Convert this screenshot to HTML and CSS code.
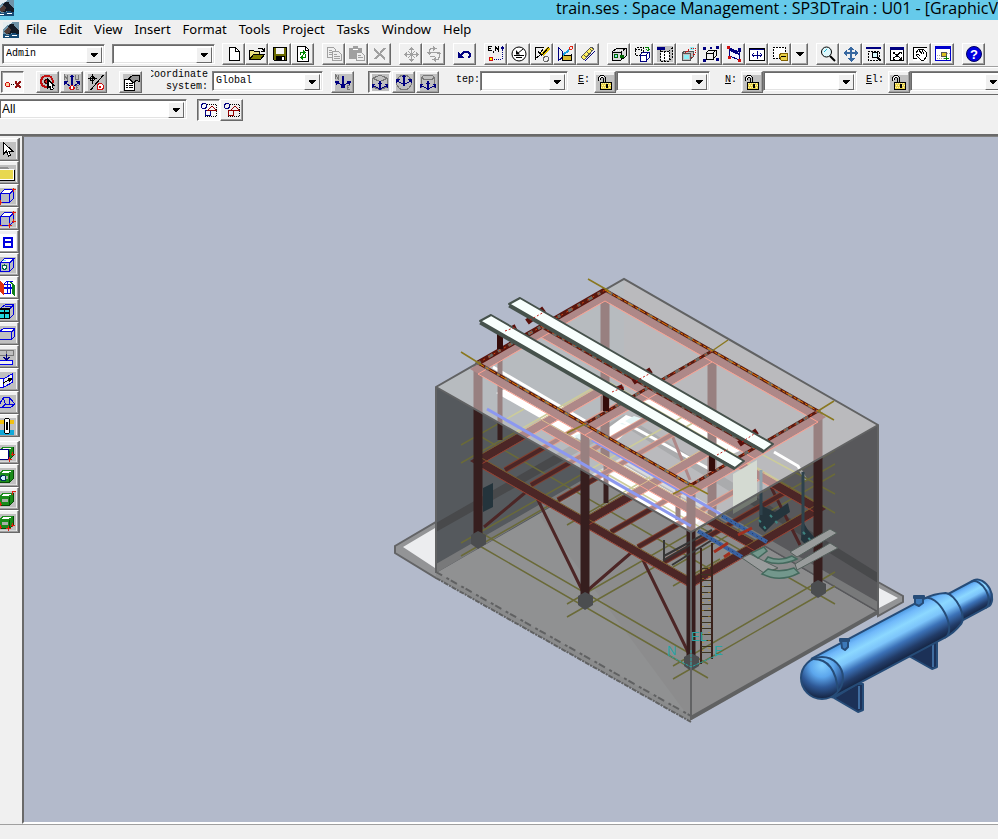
FILE: index.html
```html
<!DOCTYPE html>
<html lang="en">
<head>
<meta charset="utf-8">
<title>Space Management</title>
<link rel="stylesheet" href="styles.css">
</head>
<body>
<svg class="defs" aria-hidden="true">
  <symbol id="app" viewBox="0 0 16 16"><path fill="#6f93a8" d="M0 0h16v16H0z"/><path fill="#e4edf1" d="M0 0h9L7 2 4 3 2 6 0 7z"/><path fill="#141a24" d="M5 5l2-3h4l1 3 4 3v4l-6-1-5 1-3-2z"/><path fill="#4e3b37" d="M2 8l3-3 3 2-1 4-4 1-2-2z"/><path fill="#174a74" d="M0 12l5 1 5-2 6 1v4H0z"/><path fill="#fff" d="M2 14h4v1H2zM9 13h5v1H9z"/></symbol>
  <symbol id="drop" viewBox="0 0 16 16"><path fill="#000" d="M4 6h8v1H11v1h-1v1H9v1H7V9H6V8H5V7H4z"/></symbol>
  <symbol id="lock" viewBox="0 0 18 16"><path fill="#c0c0c0" d="M0 0h18v16H0z"/><path class="k" d="M2.500 6V3l2-2h3l2 2v4M4.500 5V4l1-1h1l1 1v3"/><path class="w" d="M3.500 5V4l2-2h2"/><path fill="#e8d048" stroke="#000" d="M4.500 7.500h11v7h-11z"/><path stroke="#fff8b0" stroke-dasharray="1 1" d="M5 9h10M6 11h9M5 13h10"/><path class="k" stroke-width="2" d="M11 9v4"/></symbol>
  <symbol id="cube" viewBox="0 0 16 16"><path fill="#c0c0c0" d="M0 0h16v16H0z"/><path fill="#b8bcc4" d="M1 6l4-4h9v8l-4 4H1z"/><path fill="#fff" d="M2 5l3-3h9l-3 3z"/><path class="u" d="M1 6h9v8H1zM1 6l4-4h9l-4 4M14 2v8l-4 4"/></symbol>
  <symbol id="gcube" viewBox="0 0 16 16"><path fill="#c0c0c0" d="M0 0h16v16H0z"/><path fill="#1a8c1a" d="M0 6l4-4h10v8l-4 4H0z"/><path fill="#fff" d="M2 5l3-2h7l-3 2z"/><path fill="#a8b0a8" d="M3 8h5v3H3z"/><path stroke="#064c06" d="M0 14h10l4-4V2M10 6v8"/></symbol>
</svg>

<header class="title"><svg class="app"><use href="#app"/></svg><h1>train.ses : Space Management : SP3DTrain : U01 - [GraphicV</h1></header>

<nav class="menu">
  <svg class="app"><use href="#app"/></svg>
  <button>File</button><button>Edit</button><button>View</button><button>Insert</button><button>Format</button><button>Tools</button><button>Project</button><button>Tasks</button><button>Window</button><button>Help</button>
</nav>

<div class="bar first">
  <span class="combo std"><select aria-label="Permission group"><option>Admin</option></select><svg><use href="#drop"/></svg></span>
  <span class="combo std"><select aria-label="Filter"><option></option></select><svg><use href="#drop"/></svg></span>
  <div class="group">
    <button aria-label="New"><svg viewBox="0 0 16 16"><path fill="#fff" stroke="#000" d="M3.500 1.500h6l4 4v9h-10z"/><path class="k" d="M9.500 1.500v4h4"/></svg></button>
    <button aria-label="Open"><svg viewBox="0 0 16 16"><path fill="#e8e080" stroke="#000" d="M.5 13.500v-9h4l1 1h5v3"/><path fill="#808000" stroke="#000" d="M.5 13.500l4-5h11l-4 5z"/><path class="k" d="M9 3l2-1h2l2 3M15 2v3h-3"/></svg></button>
    <button aria-label="Save"><svg viewBox="0 0 16 16"><path fill="#6b6b00" stroke="#000" d="M1.500 1.500h13v13h-12l-1-1z"/><path fill="#f4f4f4" d="M4 2h8v6H4z"/><path fill="#000" d="M4 10h9v5H4z"/><path fill="#fff" d="M10 11h2v3h-2z"/></svg></button>
    <button aria-label="Refresh"><svg viewBox="0 0 16 16"><path fill="#fff" stroke="#000" d="M2.500 .5h8l3 3v12h-11z"/><path class="k" d="M10.500 1v3h3"/><path class="g" d="M5.500 9V6.500h4M10.500 8v3.500h-3"/><path fill="#080" d="M8 4l3 2.500-3 2.500zM8 9v5l-3-2.500z"/></svg></button>
  </div>
  <div class="group off">
    <button disabled aria-label="Copy"><svg viewBox="0 0 16 16"><path class="n" d="M1.500 1.500h6l2 2v8h-8zM3 4.500h3M3 6.500h3M3 8.500h3"/><path fill="#eee" stroke="#a0a0a0" d="M6.500 5.500h6l3 3v6h-9z"/><path class="n" d="M8 8.500h3M8 10.500h6M8 12.500h6"/></svg></button>
    <button disabled aria-label="Paste"><svg viewBox="0 0 16 16"><path fill="#a0a0a0" d="M0 2h4V0h5v2h4v11H0z"/><path class="w" d="M4 3.500h5"/><path fill="#eee" stroke="#a0a0a0" d="M7.500 6.500h5l3 3v5h-8z"/><path class="n" d="M9 9.500h3M9 11.500h5"/></svg></button>
    <button disabled aria-label="Delete"><svg viewBox="0 0 16 16"><path class="n" stroke-width="2" d="M2 3l11 10M13 2L3 13"/></svg></button>
  </div>
  <div class="group off">
    <button disabled aria-label="Move"><svg viewBox="0 0 16 16"><path class="n" d="M8.500 3v11M3 8.500h11M5 5l7 7M12 5l-7 7"/><path fill="#a0a0a0" d="M8.500 1l2.500 3H6zM8.500 16l2.500-3H6zM1 8.500L4 6v5zM16 8.500L13 6v5z"/></svg></button>
    <button disabled aria-label="Rotate"><svg viewBox="0 0 16 16"><path class="n" d="M8 2.500H5l-2 2v3M9 13.500h3l1-2V8M6 6.500h6M4 10.500h5"/><path fill="#a0a0a0" d="M7 0v5l4-2.500zM10 11v5l-4-2.500zM13 5l2 3h-5zM3 9l3-3H0z"/></svg></button>
  </div>
  <div class="group"><button aria-label="Undo"><svg viewBox="0 0 16 16"><path class="b" stroke-width="2" d="M4 9l3-3h4l2 2v2l-2 2"/><path fill="#000080" d="M1 6v6h6z"/></svg></button></div>
  <div class="group">
    <button aria-label="PinPoint"><svg viewBox="0 0 16 16"><path class="k" d="M.5 0v5M1 .5h3M1 2.500h2M1 4.500h3M5 5v2M7.500 5V0l3 5V0"/><path stroke="#000080" stroke-dasharray="1 1" d="M14.500 4v9M6 13.500h8"/><path fill="#000080" d="M14 0l2 2-2 2-2-2z"/><circle cx="3" cy="13" r="2" fill="#ff0" stroke="#d01010"/></svg></button>
    <button aria-label="Point along"><svg class="smooth" viewBox="0 0 16 16"><circle cx="8" cy="8" r="7" fill="#fff" stroke="#000" stroke-width="1"/><path class="k" d="M3 9.500h10M5 11.500h6M6 8l6-5"/><path fill="#000" d="M5 8.500V4l4 4.500z"/></svg></button>
    <button aria-label="Measure"><svg viewBox="0 0 16 16"><path class="k" d="M1 1.500h9M1.500 1v13M1 13l8-6M4 5l2 3 3-5"/><path stroke="#e0c000" stroke-width="3" d="M15 2L8 9"/><path class="k" d="M15 1L7 10"/><circle cx="12" cy="13" r="2.500" stroke="#666"/></svg></button>
    <button aria-label="Sketch plane"><svg viewBox="0 0 16 16"><path class="b" d="M1 1v14M1 1l4 4v7l-4 3M4 12l8-8"/><path fill="#d8b830" stroke="#000" d="M5 10l9-1v5H5z"/><path stroke="#18a0e0" stroke-width="2" d="M6 9l6-5"/><circle cx="14" cy="2" r="1.500" class="r"/></svg></button>
    <button aria-label="Ruler"><svg viewBox="0 0 16 16"><path fill="#fff060" stroke="#555" d="M1 11L11 1l3 2L4 14z"/><path class="b" d="M5 15L15 5"/><path stroke="#555" d="M4 9l2 2M7 6l2 2M10 3l2 2"/></svg></button>
  </div>
  <div class="group">
    <button aria-label="Define work set"><svg viewBox="0 0 16 16"><path fill="#d8d8d8" stroke="#000" d="M1 6l5-4h9v8l-5 4H1zM1 6h9v8M10 6l5-4"/><circle cx="5" cy="10" r="2" fill="#90e0f0" stroke="#060"/><path fill="#060" d="M9 9h4v3H9z"/><path class="w" stroke-dasharray="1 1" d="M5 4h7"/></svg></button>
    <button aria-label="Copy view"><svg viewBox="0 0 16 16"><path stroke="#000" stroke-dasharray="2 1" d="M1 3h6v6H1zM1 3l2-2h6M9 1v6"/><path fill="#fff" stroke="#000080" d="M6 9h6v6H6zM6 9l3-3h6v6l-3 3M12 9l3-3"/><path class="g" d="M11 1h3v4M12 3l2 2 2-2"/></svg></button>
    <button aria-label="Clip volume"><svg viewBox="0 0 16 16"><path fill="#c0c0c0" d="M0 0h16v16H0z"/><path fill="#000080" d="M0 1h8v3H0z"/><path fill="#fff" d="M4 6h8v8H4z"/><path class="k" stroke-dasharray="2 1" d="M3 4v11h9V5H3M12 5l3-3v10l-3 3M7 5v10"/></svg></button>
    <button aria-label="Clip by plane"><svg viewBox="0 0 16 16"><path fill="#c0c0c0" stroke="#555" d="M2 7h8v7H2zM2 7l3-2h8v6l-3 3"/><path fill="#8cf0f8" d="M4 9h5v4H4zM10 1h4v3h-4z"/><path stroke="#d01010" stroke-dasharray="1 1" d="M5 7l6-5h4v5l-4 6"/></svg></button>
    <button aria-label="Fit selected"><svg viewBox="0 0 16 16"><path class="k" d="M3 7h7v6H3zM3 7l3-3h7v6l-3 3M10 7l3-3"/><path fill="#000080" d="M0 1h3v3H0zM13 0h3v3h-3zM0 13h3v3H0zM13 12h3v3h-3zM7 1h2v2H7z"/></svg></button>
    <button aria-label="Look at surface"><svg viewBox="0 0 16 16"><path fill="#f0f4ff" stroke="#000080" d="M3 2l10 4v8L4 10z"/><path stroke="#000080" stroke-width="2" d="M4 4l9 4"/><path fill="#d01010" d="M1 0h3v3H1zM12 13h3v3h-3zM2 10h3v3H2z"/><path fill="#000080" d="M12 2h3v4h-3z"/></svg></button>
    <button aria-label="Rotate view"><svg viewBox="0 0 16 16"><path fill="#fff" stroke="#000" d="M.5 2.500h15v12H.5z"/><path class="b" d="M1 3.500h14M8 5v8M3 9h10M5 7L3 9l2 2M11 7l2 2-2 2"/></svg></button>
    <button aria-label="Named views"><svg viewBox="0 0 16 16"><path fill="#fff" stroke="#000" stroke-dasharray="2 1" d="M1 1h12v11H1z"/><path fill="#e8d048" stroke="#806000" d="M7 9l3-2h5v7H9z"/><path class="k" d="M9 10h5"/></svg></button>
    <button class="narrow" aria-label="More views"><svg><use href="#drop"/></svg></button>
  </div>
  <div class="group">
    <button aria-label="Zoom"><svg class="smooth" viewBox="0 0 16 16"><circle cx="6.500" cy="6" r="5" fill="#dff8fc" stroke="#000"/><path class="k" stroke-width="2" d="M10 10l5 5"/><path stroke="#18b0d0" d="M4 6l3-3"/></svg></button>
    <button aria-label="Pan"><svg viewBox="0 0 16 16"><path stroke="#3868a0" stroke-width="2" d="M8 3v11M3 7h10"/><path fill="#3868a0" d="M8 0l3 4H5zM8 16l4-4H4zM0 7l4-3v6zM16 7l-4-3v6z"/></svg></button>
    <button aria-label="Zoom area"><svg viewBox="0 0 16 16"><path fill="#000080" d="M0 1h15v2H0z"/><path class="k" stroke-dasharray="2 1" d="M2 5h11v9H2z"/><circle cx="9" cy="9" r="3" fill="#d8f8fc" stroke="#000"/><path class="k" stroke-width="2" d="M11 11l4 4"/></svg></button>
    <button aria-label="Fit"><svg viewBox="0 0 16 16"><path fill="#fff" stroke="#000" d="M1.500 2.500h13v12h-13z"/><path fill="#000080" d="M1 1h14v3H1z"/><path class="k" d="M4 6l8 7M12 6l-8 7M4 8V6h2M10 6h2v2M4 11v2h2M10 13h2v-2"/></svg></button>
    <button aria-label="Grab"><svg viewBox="0 0 16 16"><path fill="#fff" d="M1 1h14v14H1z"/><path class="k" d="M15 1H1v11h4M4 7l3-4 2 1 2-1 3 3 1 4-3 4H9l-5-5 2-1 2 2M7 4l3 4M10 4l2 4"/></svg></button>
    <button aria-label="New window"><svg viewBox="0 0 16 16"><path fill="#fff" stroke="#00c" d="M.5 .5h15v14H.5z"/><path fill="#00c" d="M0 0h16v3H0z"/><path fill="#d8c020" stroke="#555" d="M6.500 6.500h5v4h-5z"/><path stroke="#aaa" stroke-dasharray="1 1" d="M2 9h4M2 12h12M12 7h3"/><path class="g" d="M9 12h5M11 10v4"/></svg></button>
  </div>
  <div class="group"><button aria-label="Help"><svg class="smooth" viewBox="0 0 16 16"><circle cx="8" cy="8" r="7.500" fill="#0000e0" stroke="#000060"/><text x="8" y="13" class="q">?</text></svg></button></div>
</div>

<div class="bar second">
  <div class="group"><button class="on" aria-label="PinPoint target"><svg viewBox="0 0 16 16"><circle cx="3" cy="10" r="2" fill="#ffd0a0" stroke="#d01010"/><path class="k" stroke-dasharray="1 1" d="M6 10h4"/><path stroke="#901010" stroke-width="2" d="M10 7l5 6M15 7l-5 6"/></svg></button></div>
  <div class="group apart">
    <button aria-label="Reposition target"><svg viewBox="0 0 16 16"><path fill="#c0c0c0" d="M0 0h16v16H0z"/><circle cx="7" cy="7" r="5.500" stroke="#c01010" stroke-width="2"/><circle cx="7" cy="7" r="2" fill="#e02020" stroke="#400"/><path fill="#fff" stroke="#000" d="M8 5v8l2-1 1 3 2-1-1-3h2z"/></svg></button>
    <button aria-label="Set axes"><svg viewBox="0 0 16 16"><path fill="#c0c0c0" d="M0 0h16v16H0z"/><path class="b" d="M8 1v9M6 3l2-2 2 2M7 12L1 8M9 12l6-4"/><path stroke="#777" d="M1 6V1l3 5V1M11 1v4h3V1M15 11h-3v4h3M12 13h2"/><path fill="#000080" d="M0 7h4l-3 4zM16 7h-4l3 4z"/><circle cx="8" cy="13" r="2" fill="#fff" stroke="#d01010"/></svg></button>
    <button aria-label="Relative tracking"><svg viewBox="0 0 16 16"><path fill="#c0c0c0" d="M0 0h16v16H0z"/><path class="k" d="M4.500 0v9M0 4.500h9M15 1L3 15"/><circle cx="4.500" cy="4.500" r="2" class="k"/><circle cx="12" cy="12" r="3" fill="#fff" stroke="#d01010"/><path fill="#d01010" d="M11 11h2v2h-2z"/></svg></button>
  </div>
  <div class="group"><button aria-label="Properties"><svg viewBox="0 0 16 16"><path fill="#c0c0c0" d="M0 0h16v16H0z"/><path fill="#fff" stroke="#000" d="M1.500 5.500h10v10h-10z"/><path class="k" d="M3 8.500h2M6 8.500h4M3 10.500h2M6 10.500h4M3 12.500h2M6 12.500h4"/><path fill="#909090" stroke="#000" d="M6 4l4-3h6v6l-3-1-3 2z"/></svg></button></div>
  <label class="coord" for="coord"><span>Coordinate</span><span>system:</span></label>
  <span class="combo wide"><select id="coord"><option>Global</option></select><svg><use href="#drop"/></svg></span>
  <div class="group ne"><button aria-label="North east"><svg viewBox="0 0 16 16"><path fill="#c0c0c0" d="M0 0h16v16H0z"/><path stroke="#777" d="M1 5V1l3 4V1M15 11h-3v4h3M12 13h2"/><path class="b" d="M8 2v8M8 11L3 8M8 11l5-3"/><path fill="#000080" d="M0 7h4l-2 4zM16 7h-4l2 4zM6 9h4v4H6z"/></svg></button></div>
  <div class="group apart planes">
    <button class="on" aria-label="Plan plane"><svg viewBox="0 0 16 16"><path fill="#c0c0c0" d="M0 0h16v16H0z"/><path stroke="#777" d="M1 4l7-3 7 3v8l-7 3-7-3zM1 4l7 3 7-3"/><path class="b" d="M8 7v7M2 11l6 3 6-3"/><path fill="#000080" d="M8 6l2 3H6zM0 9h4l-3 4zM16 9h-4l3 4zM7 12h2v3H7z"/></svg></button>
    <button aria-label="Elevation plane"><svg viewBox="0 0 16 16"><path fill="#c0c0c0" d="M0 0h16v16H0z"/><circle cx="8" cy="8" r="7" stroke="#777"/><path class="b" d="M8 3v7M2 7l6 3 6-3"/><path fill="#000080" d="M8 0l2 3H6zM0 5h4l-3 4zM16 5h-4l3 4zM7 8h2v3H7z"/></svg></button>
    <button aria-label="Section plane"><svg viewBox="0 0 16 16"><path fill="#c0c0c0" d="M0 0h16v16H0z"/><path stroke="#777" d="M2 3l2-2h8l2 2v10M2 3v10M2 3l2 2h8l2-2"/><path class="b" d="M8 8v6M2 11l6 3 6-3"/><path fill="#000080" d="M8 6l2 3H6zM0 9h4l-3 4zM16 9h-4l3 4zM7 12h2v3H7z"/></svg></button>
  </div>
  <label class="step" for="step">Step:</label>
  <span class="combo small"><select id="step"><option></option></select><svg><use href="#drop"/></svg></span>
  <label class="axis" for="east"><u>E</u>:</label><button class="lock" aria-label="Lock easting"><svg><use href="#lock"/></svg></button>
  <span class="combo coordval"><select id="east"><option></option></select><svg><use href="#drop"/></svg></span>
  <label class="axis" for="north"><u>N</u>:</label><button class="lock" aria-label="Lock northing"><svg><use href="#lock"/></svg></button>
  <span class="combo coordval"><select id="north"><option></option></select><svg><use href="#drop"/></svg></span>
  <label class="axis" for="elev"><u>E</u>l:</label><button class="lock" aria-label="Lock elevation"><svg><use href="#lock"/></svg></button>
  <span class="combo coordval"><select id="elev"><option></option></select><svg><use href="#drop"/></svg></span>
</div>

<div class="bar third">
  <span class="combo locate"><select aria-label="Locate filter"><option>All</option></select><svg><use href="#drop"/></svg></span>
  <div class="group">
    <button class="on" aria-label="Inside fence"><svg viewBox="0 0 16 16"><circle cx="3" cy="4" r="2.500" class="b"/><path stroke="#000" stroke-dasharray="1 1" d="M6 2.500h10M15.500 3v12M4 14.500h11"/><path class="b" d="M4.500 8.500h5v5h-5z"/><path stroke="#900000" d="M7 8l4-4 4 4z"/></svg></button>
    <button aria-label="Overlapping fence"><svg viewBox="0 0 16 16"><circle cx="3" cy="4" r="2.500" class="b"/><path stroke="#000" stroke-dasharray="1 1" d="M6 2.500h10M15.500 3v12M4 14.500h11"/><path stroke="#900000" d="M4.500 8.500h5v5h-5zM7 8l4-4 4 4z"/></svg></button>
  </div>
</div>

<main class="work">
  <aside class="tools">
    <div class="stack">
      <button aria-label="Select"><svg viewBox="0 0 16 16"><path fill="#c0c0c0" d="M0 0h16v16H0z"/><path fill="#fff" stroke="#000" d="M4 1v11l3-3 2 5 2-1-2-4h4z"/></svg></button>
      <button aria-label="Folder"><svg viewBox="0 0 16 16"><path fill="#c0c0c0" d="M0 0h16v16H0z"/><path fill="#909090" d="M0 4V2h8l2 2v2H0z"/><path fill="#e8d850" stroke="#fff" d="M0 5h14v9H0z"/><path class="k" d="M0 15h15V5"/></svg></button>
      <button aria-label="Volume by two points"><svg viewBox="0 0 16 16"><use href="#cube"/><path class="r" d="M12 2h4M14 0v4M0 14h3M1 12v4"/></svg></button>
      <button aria-label="Volume by four points"><svg viewBox="0 0 16 16"><use href="#cube"/><path class="r" d="M12 2h4M14 0v4M0 14h3M12 10h4M14 8v4M8 14h4M10 12v4"/></svg></button>
      <button aria-label="Properties form"><svg viewBox="0 0 16 16"><path fill="#fff" d="M0 0h16v16H0z"/><path class="u" stroke-width="2" d="M5 4h7v9H5zM5 8h7"/></svg></button>
      <button aria-label="Volume by object"><svg viewBox="0 0 16 16"><use href="#cube"/><path fill="#70e0f0" d="M4 3h3v1H4z"/><circle cx="5" cy="10" r="2" fill="#fff" stroke="#064"/></svg></button>
      <button aria-label="Volume between planes"><svg viewBox="0 0 16 16"><path fill="#fff" d="M0 0h16v16H0z"/><path class="u" d="M4 5h7v8H4zM8 2v11M4 8h8M4 5l3-3h6"/><path fill="#e03010" d="M1 1l4 4v10l-4-4z"/><path fill="#108020" d="M8 1l4 3v9l3 3V6l-4-4z"/></svg></button>
      <button aria-label="Volume from grid"><svg viewBox="0 0 16 16"><path fill="#c0c0c0" d="M0 0h16v16H0z"/><path class="u" d="M2 5l4-3h8v9l-4 4M6 4h8M10 6l4-4"/><path fill="#20d8e0" stroke="#000" stroke-width="1.500" d="M0 6h10v9H0zM5 6v9M0 10h10"/></svg></button>
      <button aria-label="Volume by box"><svg viewBox="0 0 16 16"><path fill="#c0c0c0" d="M0 0h16v16H0z"/><path fill="#fff" d="M1 6l3-3h11l-3 3z"/><path class="u" d="M0 6h12v7H0zM0 6l4-3h11v7l-3 3M12 6l3-3"/></svg></button>
      <button aria-label="Merge volumes"><svg viewBox="0 0 16 16"><path fill="#c0c0c0" d="M0 0h16v16H0z"/><path stroke="#777" d="M0 2h14v5H0zM7 2v5"/><path fill="#eee" stroke="#00e" d="M0 11h13v4H0z"/><path class="b" d="M7 5v5M4 8l3 3 3-3"/></svg></button>
      <button aria-label="Volume along path"><svg viewBox="0 0 16 16"><path fill="#c0c0c0" d="M0 0h16v16H0z"/><path fill="#eee" stroke="#00e" d="M4 7l9-5v8l-9 5z"/><path fill="#fff" stroke="#00e" d="M0 7h4v8H0z"/><path class="k" d="M4 11l7-4"/><path fill="#000" d="M8 6h5l-3 4z"/></svg></button>
      <button aria-label="Prismatic volume"><svg viewBox="0 0 16 16"><path fill="#c0c0c0" d="M0 0h16v16H0z"/><path class="u" d="M0 10l4-7h6l5 6-4 3H0zM4 3l2 6h9M6 9l-3 3M10 3v6"/></svg></button>
      <button aria-label="Linked volume"><svg viewBox="0 0 16 16"><path fill="#c0c0c0" d="M0 0h16v16H0z"/><path fill="#f0c010" d="M0 2h14v4H0z"/><path fill="#10a8d8" d="M0 12h14v4H0z"/><rect x="5" y="1" width="5" height="14" rx="2" fill="#fff" stroke="#000"/><path class="k" d="M7.500 4v8"/></svg></button>
    </div>
    <div class="stack">
      <button aria-label="Drawing volume"><svg viewBox="0 0 16 16"><use href="#gcube"/><path fill="#fff" stroke="#000080" d="M0 5h9v9H0z"/><path class="r" d="M11 9h4M13 7v4M8 14h4M10 12v4"/></svg></button>
      <button aria-label="Drawing volume by object"><svg viewBox="0 0 16 16"><use href="#gcube"/><circle cx="4" cy="10" r="2.500" fill="#d0f0ff" stroke="#035"/></svg></button>
      <button aria-label="Drawing volume by two points"><svg viewBox="0 0 16 16"><use href="#gcube"/><path class="r" d="M12 1h4M13 0v4M0 13h3M1 11v4"/></svg></button>
      <button aria-label="Drawing volume by four points"><svg viewBox="0 0 16 16"><use href="#gcube"/><path class="r" d="M11 11h4M13 9v4M7 14h4M9 12v4M0 13h3M1 11v4"/></svg></button>
    </div>
  </aside>

  <section class="view">
    <svg viewBox="24 137 974 684" preserveAspectRatio="xMinYMin meet" role="img" aria-label="3D model">
      <defs>
        <linearGradient id="shell" x1="0" y1="0" x2="0" y2="1"><stop offset="0" stop-color="#4c98e0"/><stop offset=".12" stop-color="#70b8fa"/><stop offset=".3" stop-color="#8cd8ff"/><stop offset=".46" stop-color="#7cc4fa"/><stop offset=".64" stop-color="#3c72b8"/><stop offset=".84" stop-color="#223c68"/><stop offset="1" stop-color="#142340"/></linearGradient>
        <radialGradient id="head" cx=".5" cy=".2" r=".8"><stop offset="0" stop-color="#84d0ff"/><stop offset=".35" stop-color="#5ca6ec"/><stop offset=".65" stop-color="#2f5a98"/><stop offset="1" stop-color="#14223e"/></radialGradient>
        <path id="grid" d="M478 363L605 290L818 411L691 485ZM542 327L755 448M585 424L712 351"/>
        <g id="frame"><use href="#grid" y="6" stroke="#5d1010" stroke-width="8"/><use href="#grid" y="11" stroke="#f74121" stroke-width="1"/></g>
      </defs>
      <path fill="#939496" stroke="#636466" stroke-width="2" d="M395 546L436 522L440 574L436 578L395 553zM878 582L903 596V602L878 616z"/>
      <path fill="#ecedef" d="M403 547L435 528V568zM879 588L898 598L879 608z"/>
      <path fill="#6e767e" d="M436 387L624 279L878 425V613L691 720L436 573z"/>
      <path fill="#74747a" d="M624 279L878 425V613L624 465z"/>
      <path fill="#e4e6e8" d="M436 573L624 465L878 613L691 720z"/>
      <path fill="#dcdcde" d="M540 516L691 720L878 613L624 465z"/>
      <path fill="#54565a" d="M436 523L624 415L878 573V583L624 426L436 532z"/>
      <path fill="#b4b6b8" d="M436 573L624 463L878 611V602L624 456L436 564z"/>

      <g fill="none">
        <path fill="#fff" d="M496 393L507 388L588 432L575 438zM600 434L626 415L640 420L618 440zM640 402L655 398L742 450L730 455zM610 474L622 470L704 516L692 528z"/>
        <path fill="#c8e8e8" d="M574 436L588 430L600 434L584 442zM620 424L634 416L646 420L634 426z"/>
        <path stroke="#fff" stroke-width="3" d="M493 367L592 425M600 478L689 528M622 421L722 476M648 410L725 454M774 452L798 466L806 480"/>
        <g stroke="#989834" stroke-width="1.500">
          <path d="M461 543L700 407M461 556L712 412M567 604L835 450M567 617L835 464M673 666L835 572M673 679L835 586M461 445L524 409M461 463L600 384M567 525L650 477M673 567L835 474M673 586L720 559"/>
          <path d="M478 531L708 664M478 545L708 678M600 470L835 604M478 435L708 568M605 369L835 494M605 380L835 513"/>
        </g>
        <path stroke="#310100" stroke-width="9" d="M605 292V460M712 352V525"/>
        <path stroke="#310100" stroke-width="5" d="M500 330V440M606 395V412M678 485V520M606 410V503"/>
        <g stroke="#5d1010" stroke-width="3"><path d="M537 498L584 594M643 560L690 656M588 590L632 552M484 527L526 492M770 485L800 545M672 435L690 480"/></g>
        <g stroke="#c7401e" stroke-width="6"><path d="M505 470L632 397M531 485L658 412M558 500L685 427M611 532L738 459M638 547L765 474M664 562L791 489"/></g>
        <g stroke="#5d1010" stroke-width="4"><path d="M505 470L632 397M531 485L658 412M558 500L685 427M611 532L738 459M638 547L765 474M664 562L791 489"/></g>
        <use href="#frame" y="92"/>
        <use href="#grid" y="93" stroke="#b87818"/>
        <path stroke="#310100" stroke-width="9" d="M478 365V538M818 412V584M585 425V596M691 487V657"/>
        <path fill="#a8b4a4" d="M733 474L757 460V500L733 514z"/>
        <path stroke="#1931e0" stroke-width="3" d="M487 409L691 526M592 440L722 515"/>
        <path fill="#0c2c3c" d="M483 488L493 483V507L483 512zM760 505L775 512L788 503L790 512L775 522L765 532L759 526zM802 520L808 530L815 538L806 545L801 540z"/>
        <path stroke="#20485c" stroke-width="3" d="M761 470V515M803 472V535"/>
        <path stroke="#40c8c0" stroke-width="2" stroke-dasharray="3 5" d="M759 520L768 532M770 515L778 524M803 532L812 542"/>
        <path stroke="#303030" stroke-width="2" d="M664 540V560L690 545M664 556L712 530M672 565L712 540"/>
        <use href="#frame"/>
      </g>

      <path fill="#fff" fill-opacity=".5" d="M436 387L624 279L878 425L691 532z"/>
      <path fill="#3c3c3c" fill-opacity=".5" d="M436 387L691 532L878 425V613L691 720L436 573z"/>
      <path fill="none" stroke="#616263" stroke-width="2" d="M436 573V387L624 279L878 425V613M436 387L691 532L878 425"/>
      <path fill="none" stroke="#606162" stroke-width="4" d="M691 718L878 612"/>
      <path fill="#8a8b8c" d="M436 572L691 716V722L436 578z"/>
      <path fill="none" stroke="#606162" stroke-width="2" stroke-dasharray="5 1 2 1" d="M436 578L691 722"/>
      <path fill="none" stroke="#606162" stroke-width="2" stroke-dasharray="7 5 3 2" d="M436 572L691 716"/>

      <g fill="#4b4d4f"><path id="foot" d="M471 535L478 531L486 535V544L478 549L471 544z"/><use href="#foot" x="107" y="61"/><use href="#foot" x="213" y="122"/><use href="#foot" x="340" y="49"/></g>
      <path fill="none" stroke="#616263" stroke-width="2" d="M691 532V720"/>

      <g fill="none">
        <path stroke="#58120c" stroke-width="5" d="M478 363L605 290"/>
        <use href="#grid" stroke="#5a1a10" stroke-width="3"/>
        <use href="#grid" stroke="#6a6a64" stroke-width="3" stroke-dasharray="3 9 5 6"/>
        <path stroke="#e87c00" stroke-width="1" stroke-dasharray="7 2 3 1" d="M478 363L691 485M605 290L818 411"/>
        <path stroke="#d84010" stroke-width="1" stroke-dasharray="2 4" d="M478 363L605 290M691 485L818 411M542 327L755 448M585 424L712 351"/>
        <path stroke="#8a7820" stroke-width="1.500" d="M588 279L609 291M461 352L482 365M712 351L728 340M818 411L834 401M818 411L834 420M567 433L585 424M673 494L691 485M691 485L708 494"/>
        <path stroke="#3a62a0" stroke-width="4" d="M698 531L742 557M722 516L767 542"/>
        <path stroke="#172c58" stroke-dasharray="1 4" d="M698 531L742 557M722 516L767 542"/>
        <path stroke="#3a221c" stroke-width="2" d="M701 548V664M712 543V659"/>
        <path stroke="#3c3420" stroke-width="10" stroke-dasharray="1 5" d="M706 568V658"/>
        <path stroke="#c4951c" stroke-dasharray="1 7" d="M703 570V655M709 568V655"/>
        <path stroke="#a03020" stroke-width="3" d="M714 552L728 543M738 535L752 528M724 557L730 553"/>
      </g>
      <path fill="#999c9c" stroke="#55605c" d="M790 552L830 529L837 533L797 557zM795 564L830 543L838 548L797 570zM742 558L750 554L778 568L764 573z"/>
      <path fill="#73978c" stroke="#44695d" stroke-width="1.500" d="M768 557Q780 562 792 556L797 559Q780 567 765 561zM768 569Q780 573 794 568L799 573Q780 583 762 574zM751 553L764 547L767 551L758 558z"/>

      <g fill="none">
        <path stroke="#350c0a" stroke-width="6" d="M500 331V349M606 392V411M712 454V471"/>
        <path stroke="#5a100c" stroke-width="6" d="M527 322L544 309M633 382L651 370M739 444L757 431M504 333L516 327M612 392L623 387"/>
      </g>
      <g id="tray" stroke="#46524c" stroke-linejoin="round">
        <path fill="#f8fffd" stroke-width="2" d="M509 304L520 298L773 444L764 451z"/>
        <path fill="none" stroke-width="3" d="M509 306L764 452"/>
      </g>
      <use href="#tray" x="-29" y="17"/>
      <path fill="none" stroke="#c02018" stroke-dasharray="2 2" d="M530 320L544 312M505 331L516 327M636 381L649 374M612 392L624 387M742 442L754 434M717 455L728 449"/>

      <g fill="none" stroke="#28a4a4"><path stroke-dasharray="3 1" d="M668 655L691 667L722 653M691 650V667"/></g>
      <g class="compass"><text x="667" y="655">N</text><text x="691" y="641">EL</text><text x="714" y="655">E</text></g>

      <g stroke="#264c78" stroke-width="2" stroke-linejoin="round">
        <path fill="#1c3157" d="M834 698L857 684L863 684V710L858 712zM907 655L932 641L937 641V667L932 669z"/>
        <path fill="none" stroke="#62a8e8" stroke-width="1" d="M859 686V709M933 643V667"/>
        <g transform="translate(822 678) rotate(-28)">
          <path fill="url(#shell)" d="M140 -15H180A10 15 0 0 1 180 15H140z"/>
          <path fill="none" d="M177 -15A9 15 0 0 1 177 15"/>
          <path fill="url(#shell)" d="M128 -22Q138 -22 149 -17A9 18 0 0 1 147 18Q138 22 128 22z"/>
          <path fill="url(#shell)" d="M0 -22H128A11 22 0 0 1 128 22H0z"/>
        </g>
        <circle cx="822" cy="678" r="21" fill="url(#head)"/>
        <path fill="none" d="M812 659Q835 658 838 691"/>
        <path fill="#3c78b8" d="M841 640h7v7l-3 3-3-2zM915 597h8v6l-4 3-4-2z"/>
        <path fill="#6ab4ee" d="M840 639h9v2h-9zM914 596h10v2h-10z"/>
      </g>
    </svg>
  </section>
</main>
<footer class="status"></footer>
</body>
</html>
```
FILE: styles.css
```css
* { box-sizing: border-box; }
body {
  margin: 0;
  height: 100vh;
  display: flex;
  flex-direction: column;
  overflow: hidden;
  background: #f0f0f0;
  color: #000;
  font: 10px/12px "Liberation Mono", monospace;
}
button, select { font: inherit; color: inherit; border-radius: 0; }
svg { display: block; fill: none; flex: none; shape-rendering: crispEdges; }
.defs { position: absolute; width: 0; height: 0; }
.smooth, .view svg { shape-rendering: auto; }
.k { stroke: #000; }
.b { stroke: #000080; }
.u { stroke: #0000e0; }
.g { stroke: #008000; }
.r { stroke: #e02010; }
.n { stroke: #a0a0a0; }
.w { stroke: #fff; }
.q { fill: #fff; font: bold 13px "Liberation Sans", sans-serif; text-anchor: middle; }

.title {
  flex: none;
  height: 20px;
  display: flex;
  justify-content: space-between;
  background: #66caea;
}
.title .app { margin-left: -2px; }
.title h1 {
  margin: 0;
  font: 16px/17px "Open Sans", sans-serif;
  white-space: nowrap;
}
.app { width: 16px; height: 16px; }

.menu {
  flex: none;
  height: 21px;
  display: flex;
  align-items: flex-start;
  gap: 12px;
  padding-left: 3px;
}
.menu .app { margin: 2px -5px 0 0; }
.menu button {
  padding: 0;
  border: 0;
  background: none;
  font: 13px/19px "Noto Sans", sans-serif;
}

.bar {
  flex: none;
  display: flex;
  align-items: flex-start;
  overflow: hidden;
}
.bar > * { flex: none; }
.first { gap: 8px; padding: 2px 0 1px 2px; border-bottom: 1px solid #a0a0a0; }
.second { height: 28px; padding: 3px 0 0 1px; border-top: 1px solid #fff; border-bottom: 1px solid #696969; }
.third { height: 41px; gap: 10px; padding-top: 4px; border-bottom: 2px solid #696969; }

.group { display: flex; }
.group button, .lock, .stack button {
  display: flex;
  align-items: center;
  justify-content: center;
  width: 23px;
  height: 22px;
  padding: 0;
  border: 1px solid;
  border-color: #fff #696969 #696969 #fff;
  box-shadow: inset -1px -1px #a0a0a0;
  background: #f0f0f0;
}
.group svg { width: 16px; height: 16px; }
.group .narrow { width: 17px; }
.group .on {
  border-color: #696969 #fff #fff #696969;
  box-shadow: inset 1px 1px #a0a0a0;
  background: #f8f8f8;
}
.second .group { margin-right: 12px; }
.second .group svg { width: 18px; height: 17px; }
.apart { gap: 1px; }
.second .ne { margin: 0 14px 0 8px; }
.second .planes { margin-right: 17px; }

.combo {
  display: flex;
  height: 20px;
  border: 1px solid;
  border-color: #808080 #fff #fff #808080;
  box-shadow: inset 1px 1px #696969, inset -1px -1px #e3e3e3;
  padding: 2px;
  background: #fff;
}
.first .combo { margin: 1px -1px 0 0; }
.combo select {
  flex: 1;
  min-width: 0;
  padding: 0 0 0 1px;
  border: 0;
  appearance: none;
  background: #fff;
}
.combo svg {
  width: 16px;
  height: 16px;
  border: 1px solid;
  border-color: #fff #696969 #696969 #fff;
  background: #f0f0f0;
}
.std { width: 103px; }
.wide { width: 111px; }
.small { width: 88px; }
.coordval { width: 94px; }
.locate { width: 188px; margin-left: -1px; }
.locate select { padding: 0; font: 12px/14px "Liberation Sans", sans-serif; }

.coord {
  display: flex;
  flex-direction: column;
  align-items: flex-end;
  width: 57px;
  margin: -2px 4px 0 -3px;
  overflow: hidden;
}
.step {
  display: flex;
  justify-content: flex-end;
  width: 24px;
  padding-top: 3px;
  overflow: hidden;
}
.axis { width: 31px; padding: 3px 4px 0 0; text-align: right; }
.small + .axis { width: 26px; }
.lock { width: 22px; }
.lock svg { width: 18px; height: 17px; }

.work { flex: 1; display: flex; min-height: 0; }
.tools { flex: none; width: 22px; padding-top: 2px; overflow: hidden; }
.stack { width: 20px; margin-bottom: 4px; border-right: 1px solid #696969; }
.stack button { width: 19px; height: 23px; border-left: 0; }
.stack svg { width: 17px; height: 18px; margin-left: -4px; }
.view {
  flex: 1;
  min-width: 0;
  border: solid;
  border-width: 1px 0 2px 2px;
  border-color: #808080 #fff #fff #696969;
  background: #b3bacb;
}
.view svg { width: 100%; height: 100%; }
.compass { fill: #28a4a4; font: 13px "Liberation Sans", sans-serif; }
.status { flex: none; height: 15px; border-top: 1px solid #a0a0a0; }
```
